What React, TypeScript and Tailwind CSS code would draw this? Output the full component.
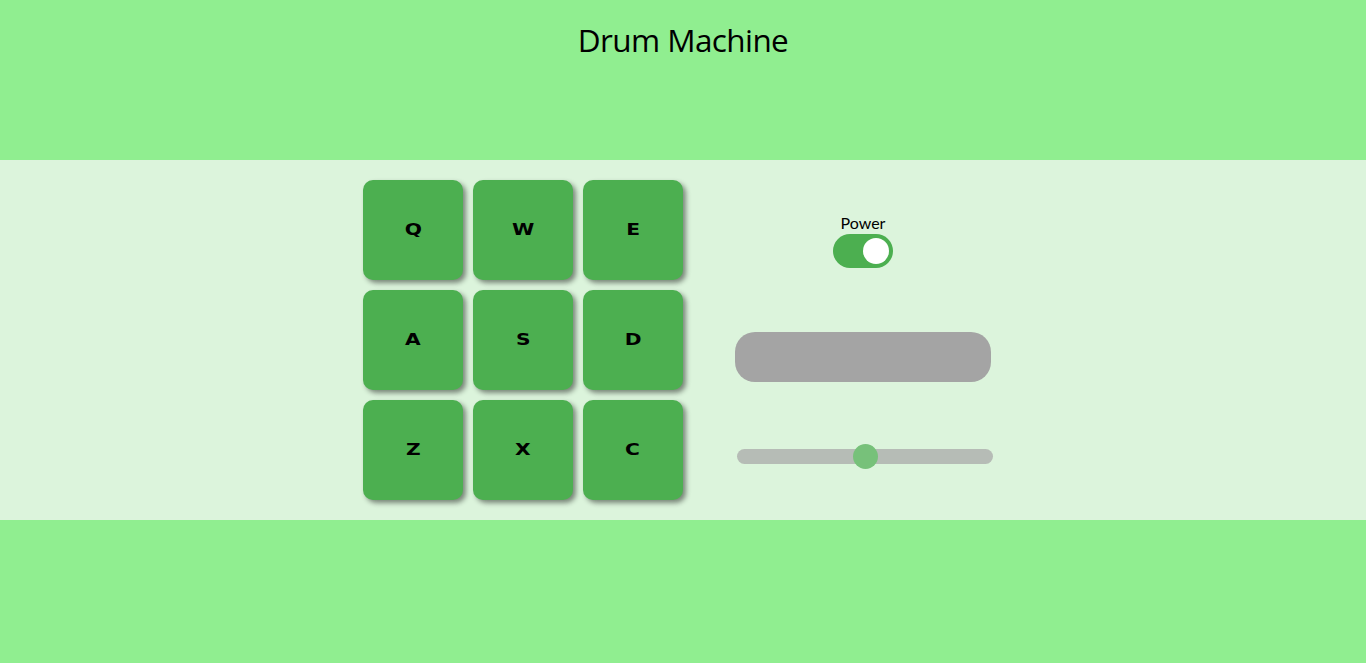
import React from "react";

const keys = ["Q", "W", "E", "A", "S", "D", "Z", "X", "C"];

export default function App() {
  return (
    <div className="w-[1366px] h-[663px] bg-[#90EE90] flex flex-col" style={{ fontFamily: '"Open Sans", "Noto Sans", sans-serif' }}>
      <div className="h-[160px] flex justify-center pt-[18px]">
        <h1 className="text-[31.5px] leading-[44px] text-black tracking-[-0.6px]">Drum Machine</h1>
      </div>
      <div className="h-[360px] bg-[#DCF4DC] flex pl-[363px] pt-[20px]">
        <div className="grid grid-cols-[100px_100px_100px] gap-[10px] h-[320px]">
          {keys.map((k) => (
            <div
              key={k}
              className="w-[100px] h-[100px] rounded-[10px] bg-[#4CAF50] shadow-[3px_3px_5px_rgba(0,0,0,0.45)] flex items-center justify-center"
            >
              <span
                className="inline-block scale-x-[1.35] text-[15px] font-bold text-black"
                style={{ fontFamily: '"DejaVu Sans", sans-serif' }}
              >
                {k}
              </span>
            </div>
          ))}
        </div>
        <div className="ml-[51px] w-[258px] flex flex-col items-center">
          <div className="mt-[33px] text-[16px] leading-[20px] text-black" style={{ fontFamily: 'Lato, "Noto Sans", sans-serif' }}>Power</div>
          <div className="mt-[1px] w-[60px] h-[34px] rounded-full bg-[#4CAF50] relative">
            <div className="absolute right-[4px] top-[4px] w-[26px] h-[26px] rounded-full bg-white" />
          </div>
          <div className="mt-[64px] w-[256px] h-[50px] rounded-[20px] bg-[#A4A4A4] self-start ml-[1px]" />
          <div className="mt-[67px] w-[256px] h-[15px] rounded-full bg-[#B6BCB6] relative self-start ml-[3px]">
            <div className="absolute left-[116px] top-[-5px] w-[25px] h-[25px] rounded-full bg-[#77C17A]" />
          </div>
        </div>
      </div>
      <div className="flex-1" />
    </div>
  );
}
